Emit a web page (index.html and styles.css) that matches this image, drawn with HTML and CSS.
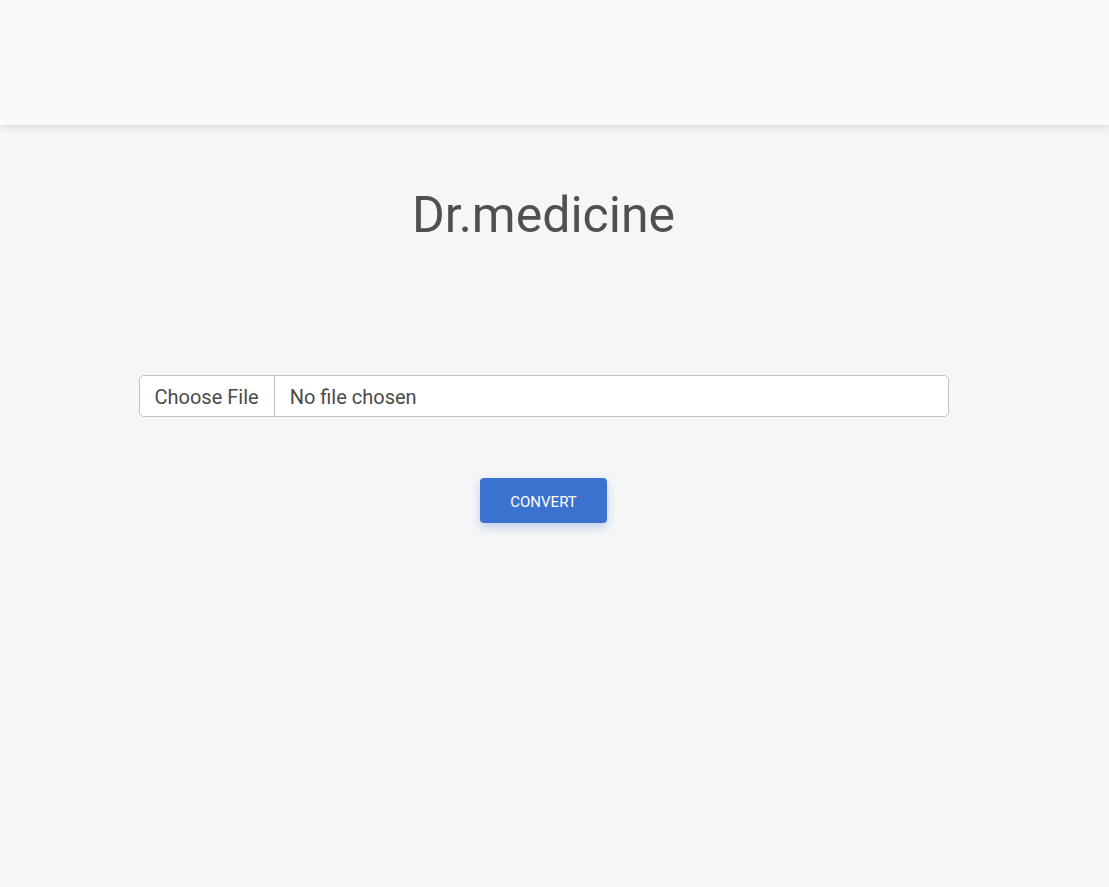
FILE: index.html
```html
<!DOCTYPE html>
<html lang="en">
<head>
<meta charset="utf-8">
<title>Dr.medicine</title>
<link rel="stylesheet" href="styles.css">
</head>
<body>
<header class="topbar"></header>
<main class="page">
  <h1 class="title">Dr.medicine</h1>
  <div class="file-field">
    <span class="file-btn">Choose File</span>
    <span class="file-name">No file chosen</span>
  </div>
  <button class="convert" type="button">Convert</button>
</main>
</body>
</html>
```

FILE: styles.css
```css
* { box-sizing: border-box; }
html, body { margin: 0; padding: 0; }
body {
  background: #f5f6f8;
  font-family: Roboto, "Liberation Sans", Arial, sans-serif;
  color: #4f4f4f;
  min-height: 887px;
}
.topbar {
  height: 125px;
  background: #fafafa;
  box-shadow: 0 2px 8px rgba(0, 0, 0, 0.12);
  position: relative;
  z-index: 1;
}
.page {
  width: 1087px;
  display: flex;
  flex-direction: column;
  align-items: center;
}
.title {
  margin: 60px 0 0;
  font-size: 50px;
  font-weight: 400;
  line-height: 60px;
  color: #505050;
}
.file-field {
  margin-top: 130px;
  width: 810px;
  height: 42px;
  display: flex;
  background: #fff;
  border: 1px solid #c2c2c2;
  border-radius: 5px;
  font-size: 20px;
  color: #4a4a4a;
}
.file-btn {
  display: flex;
  align-items: center;
  padding: 2px 15px 0;
  border-right: 1px solid #c2c2c2;
}
.file-name {
  display: flex;
  align-items: center;
  padding: 2px 15px 0;
}
.convert {
  margin-top: 61px;
  width: 127px;
  height: 45px;
  padding: 3px 0 0;
  border: none;
  border-radius: 4px;
  background: #3b71cf;
  color: #fff;
  font-family: Roboto, "Liberation Sans", Arial, sans-serif;
  font-size: 15px;
  font-weight: 400;
  text-transform: uppercase;
  box-shadow: 0 4px 10px rgba(59, 113, 207, 0.3);
  cursor: pointer;
}
```
